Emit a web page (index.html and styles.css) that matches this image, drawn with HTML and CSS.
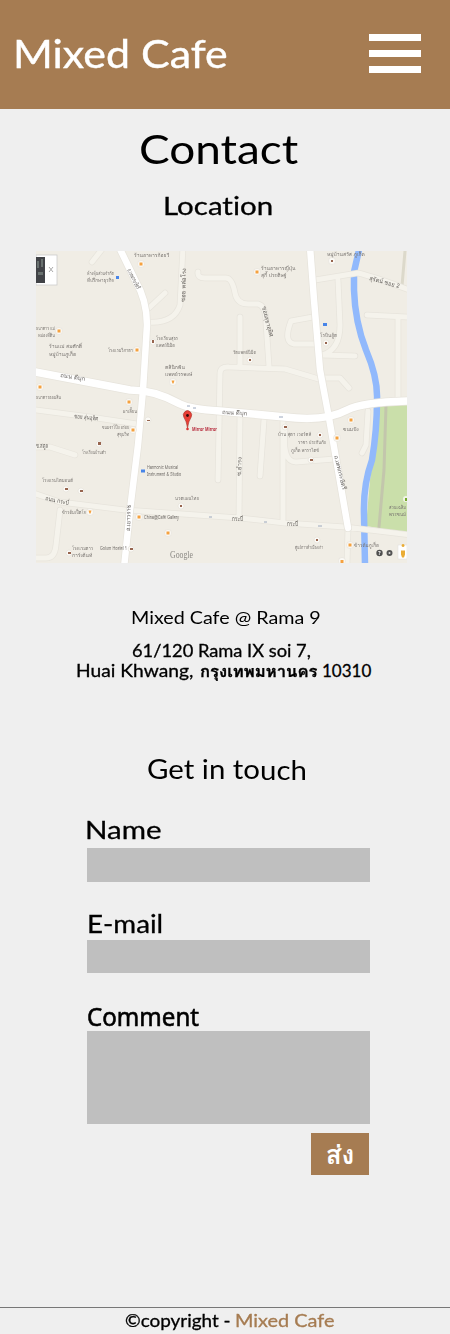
FILE: index.html
```html
<!DOCTYPE html>
<html lang="th">
<head>
<meta charset="utf-8">
<meta name="viewport" content="width=device-width">
<title>Mixed Cafe</title>
<link rel="stylesheet" href="styles.css">
</head>
<body>
<header class="header">
  <div class="brand">Mixed Cafe</div>
  <div class="menu"><span class="bar"></span><span class="bar"></span><span class="bar"></span></div>
</header>
<main class="main">
  <h1 class="title">Contact</h1>
  <h2 class="location">Location</h2>
  <svg class="map" viewBox="36 251 371 312">
    <defs>
      <path id="lanes" d="M30 492L60 502L125 510L240 518L285 523L345 527L412 535M36 410L90 417L137 424M36 447H50L75 455M60 510L56 545Q55 558 46 558H30M147 322Q174 324 180 305L183 247M149 308L165 293M92 262L103 248M198 272Q197 278 205 278H225Q232 277 235 293Q237 304 248 304H258Q266 306 266 323L269 366M240 317V365M218 480L220 374Q220 366 229 367L285 369L322 380M240 415L239 518M264 420L260 476M283 420V522M315 280L358 273Q375 277 412 291M338 280L340 325Q340 350 322 355L355 356M313 317L291 321Q283 342 294 344H314M367 315L407 317M398 317V400M323 378H340L349 388M285 430Q282 462 296 462L335 459M368 411L366 445L362 453M348 528L347 564"/>
      <path id="avenues" d="M119 247L135 280Q147 300 147 325L143 390L138 445L130 510L124 568M310 247L314 300L320 370L329 418L338 470L348 528"/>
      <path id="main-road" d="M30 371L130 390Q155 390 180 404Q190 409 220 411L285 417Q325 422 347 410Q363 402 412 401"/>
    </defs>
    <rect x="36" y="251" width="371" height="312" fill="#f0ede5"/>
    <path d="M378 405L407 402V533L366 526L370 480L374 450Z" fill="#cadfaa"/>
    <path d="M386 405L384 470L379 527" class="road" stroke="#c3c6ac" stroke-width="3"/>
    <path d="M405 251L402 286" class="road" stroke="#dcd9cb" stroke-width="3"/>
    <path d="M359 250L354 272V290Q355 322 366 350Q378 378 377 400Q377 430 372 460Q363 485 364 515L365 564" class="road" stroke="#91b9fc" stroke-width="6.5"/>
    <g class="road">
      <use href="#lanes" stroke="#e7e4dc" stroke-width="6.5"/>
      <use href="#lanes" stroke="#f5f3ec" stroke-width="5"/>
      <use href="#avenues" stroke="#e7e4dc" stroke-width="8"/>
      <use href="#main-road" stroke="#e7e4dc" stroke-width="9"/>
      <use href="#avenues" stroke="#fff" stroke-width="6.5"/>
      <use href="#main-road" stroke="#fff" stroke-width="7.5"/>
    </g>
    <g class="label">
      <text x="134" y="257">ร้านอาหารก้อยวี</text>
      <text x="87" y="275" textLength="27" lengthAdjust="spacingAndGlyphs">ห้างหุ้นส่วนจำกัด</text><text x="87" y="282" textLength="27" lengthAdjust="spacingAndGlyphs">ที่ปรึกษาธุรกิจ</text>
      <text x="261" y="270">ร้านอาหารญี่ปุ่น</text><text x="261" y="277">สุกี้ ประดิษฐ์</text>
      <text x="327" y="256">หมู่บ้านสวัส ภูเก็ต</text>
      <text x="36" y="330" textLength="19" lengthAdjust="spacingAndGlyphs">ธนาคาร แม่</text><text x="38" y="337" textLength="17" lengthAdjust="spacingAndGlyphs">หม่องที่ดิน</text>
      <text x="49" y="348">ร้านแม่ สมศักดิ์</text><text x="49" y="356">หมู่บ้านภูเก็ต</text>
      <text x="108" y="352" textLength="25" lengthAdjust="spacingAndGlyphs">โรงแรมวิภาดา</text>
      <text x="156" y="340" textLength="22" lengthAdjust="spacingAndGlyphs">โรงเรียนสุธร</text><text x="156" y="347" textLength="19" lengthAdjust="spacingAndGlyphs">แพทย์นิมิต</text>
      <text x="233" y="354" textLength="23" lengthAdjust="spacingAndGlyphs">วัดแพทย์นิมิต</text>
      <text x="320" y="337" textLength="17" lengthAdjust="spacingAndGlyphs">โรบินฮู้ด</text>
      <text x="165" y="369">คลินิกฟัน</text><text x="165" y="376">แพทย์วรพงษ์</text>
      <text x="36" y="399" textLength="25" lengthAdjust="spacingAndGlyphs">ธนาคารออมสิน</text>
      <text x="123" y="413" textLength="14" lengthAdjust="spacingAndGlyphs">ผาเลี้ยน</text>
      <text x="102" y="429" textLength="27" lengthAdjust="spacingAndGlyphs">ขนมจาโป๊ย อร่อย</text><text x="117" y="436" textLength="12" lengthAdjust="spacingAndGlyphs">สุขุมวิท</text>
      <text x="82" y="454" textLength="24" lengthAdjust="spacingAndGlyphs">โรงเรียนบ้านดำ</text>
      <text x="278" y="436" textLength="33" lengthAdjust="spacingAndGlyphs">บ้าน สุดา เวอร์คส์</text><text x="298" y="444" textLength="28" lengthAdjust="spacingAndGlyphs">ราชา ประกันภัย</text><text x="291" y="452" textLength="28" lengthAdjust="spacingAndGlyphs">ภูเก็ต พาราไดซ์</text>
      <text x="343" y="431">ขนมปัง</text>
      <text x="42" y="482" textLength="31" lengthAdjust="spacingAndGlyphs">โรงแรมไดมอนด์</text>
      <text x="147" y="469" textLength="31" lengthAdjust="spacingAndGlyphs">Harmonic Musical</text><text x="147" y="476" textLength="34" lengthAdjust="spacingAndGlyphs">Instrument &amp; Studio</text>
      <text x="175" y="500" textLength="24" lengthAdjust="spacingAndGlyphs">นวดแผนไทย</text>
      <text x="62" y="514" textLength="24" lengthAdjust="spacingAndGlyphs">ข้าวต้มเป็ดโจ</text>
      <text x="144" y="519" textLength="35" lengthAdjust="spacingAndGlyphs">China@Café Gallery</text>
      <text x="72" y="550" textLength="21" lengthAdjust="spacingAndGlyphs">โรงแรมดาว</text><text x="72" y="557">การ์เด้นท์</text>
      <text x="100" y="550" textLength="27" lengthAdjust="spacingAndGlyphs">Golum Hostel 1</text>
      <text x="295" y="549" textLength="28" lengthAdjust="spacingAndGlyphs">ศูนย์การค้าเมืองเก่า</text><text x="354" y="547" textLength="25" lengthAdjust="spacingAndGlyphs">ข้าวต้มภูเก็ต</text>
      <text x="389" y="509" textLength="17" lengthAdjust="spacingAndGlyphs">สวนเฉลิม</text><text x="389" y="516" textLength="17" lengthAdjust="spacingAndGlyphs">พระชนม์</text>
    </g>
    <g class="street">
      <text transform="translate(60 377) rotate(9)">ถนน ดีบุก</text>
      <text transform="translate(222 414) rotate(3)">ถนน ดีบุก</text>
      <text transform="translate(74 418) rotate(6)" textLength="24" lengthAdjust="spacingAndGlyphs">ซอย สุ่นอุทิศ</text>
      <text transform="translate(369 280) rotate(15)" textLength="31" lengthAdjust="spacingAndGlyphs">สุรัตน์ ซอย 2</text>
      <text transform="translate(45 500) rotate(12)" textLength="24" lengthAdjust="spacingAndGlyphs">ถนน กระบี่</text>
      <text transform="translate(185 302) rotate(-88)">ซอย หล่อโรง</text>
      <text transform="translate(127 270) rotate(63)" textLength="22" lengthAdjust="spacingAndGlyphs">ถ.เทพกระษัตรี</text>
      <text transform="translate(262 307) rotate(76)" textLength="31" lengthAdjust="spacingAndGlyphs">ซอยสุธาอุทิศ</text>
      <text transform="translate(130 531) rotate(-88)" textLength="26" lengthAdjust="spacingAndGlyphs">ถ.เยาวราช</text>
      <text transform="translate(334 456) rotate(76)" textLength="35" lengthAdjust="spacingAndGlyphs">ถ.เทพกระษัตรี</text>
      <text transform="translate(241 476) rotate(-88)">ซ.ธำรง</text>
      <text x="232" y="521" textLength="11" lengthAdjust="spacingAndGlyphs">กระบี่</text><text x="287" y="526" textLength="11" lengthAdjust="spacingAndGlyphs">กระบี่</text><text x="36" y="448" textLength="12" lengthAdjust="spacingAndGlyphs">ซ.สตูล</text>
    </g>
    <g fill="#fbfaf6" stroke="#dedbd3" stroke-width=".5">
      <circle cx="59" cy="331" r="3.5"/><circle cx="141" cy="264" r="3.5"/><circle cx="137" cy="350" r="3.5"/><circle cx="257" cy="272" r="3.5"/><circle cx="40" cy="387" r="3.5"/><circle cx="129" cy="402" r="3.5"/><circle cx="133" cy="430" r="3.5"/><circle cx="173" cy="382" r="3.5"/><circle cx="351" cy="420" r="3.5"/><circle cx="337" cy="438" r="3.5"/><circle cx="90" cy="512" r="3.5"/><circle cx="139" cy="517" r="3.5"/><circle cx="168" cy="533" r="3.5"/><circle cx="350" cy="545" r="3.5"/><circle cx="342" cy="561" r="3.5"/><circle cx="332" cy="261" r="3.5"/><circle cx="250" cy="360" r="3"/><circle cx="326" cy="343" r="3"/><circle cx="153" cy="342" r="3"/><circle cx="148" cy="420" r="3"/><circle cx="99" cy="444" r="3"/><circle cx="285" cy="427" r="3"/><circle cx="320" cy="435" r="3"/><circle cx="311" cy="460" r="3"/><circle cx="66" cy="489" r="3"/><circle cx="81" cy="491" r="3"/><circle cx="181" cy="506" r="3"/><circle cx="69" cy="553" r="3"/><circle cx="131" cy="549" r="3"/><circle cx="317" cy="540" r="3"/>
    </g>
    <path fill="#f5a13f" d="M57.500 329.500h3v3h-3zM139.500 262.500h3v3h-3zM135.500 348.500h3v3h-3zM255.500 270.500h3v3h-3zM38.500 385.500h3v3h-3zM127.500 400.500h3v3h-3zM131.500 428.500h3v3h-3zM171.500 380.500h3l-1 3h-1zM349.500 418.500h3v3h-3zM335.500 436.500h3v3h-3zM88.500 510.500h3l-1 3h-1zM137.500 515.500h3v3h-3zM166.500 531.500h3v3h-3zM348.500 543.500h3v3h-3zM340.500 560h3v3h-3z"/>
    <path fill="#97654f" d="M331 260h2v2h-2zM249 359h2v2h-2zM325 342h2v2h-2zM152 340h2v3h-2zM147 420h3v1h-3zM98 442h3v3h-3zM284 426h3v2h-3zM319 434h2v2h-2zM310 459h3v2h-3zM65 488h3v2h-3zM80 490h3v2h-3zM180 505h2v2h-2zM68 552h3v2h-3zM130 548h3v2h-3zM316 539h2v2h-2z"/>
    <path fill="#4885e8" d="M116 276h3v3h-3zM323 323h4v3h-4zM141 469.500h4v3h-4z"/>
    <path stroke="#9ca8bd" d="M187 406h3M193 408h3M279 417h4M209 517h3M264 522h3M318 526h4"/>
    <path d="M187.500 428Q186.500 421 184 417.500A4.100 4.500 0 1 1 191 417.500Q188.500 421 187.500 428" fill="#e93f35" stroke="#a52d27" stroke-width=".6"/>
    <circle cx="187.500" cy="415.500" r="1.400" fill="#330b0b"/><circle cx="187.500" cy="429" r="1.300" fill="#d33"/>
    <text class="place" x="192" y="431" textLength="25" lengthAdjust="spacingAndGlyphs">Mirror Mirror</text>
    <text class="google" x="170" y="558" textLength="23" lengthAdjust="spacingAndGlyphs">Google</text>
    <rect x="36" y="255" width="21" height="30" fill="#fff" stroke="#ccc" stroke-width=".8"/>
    <path d="M36 257H45V283H36Z" fill="#414347"/><path d="M37 261h2v7h-2zM41 259h2v8h-2zM38 272h5v3h-5z" fill="#69716f"/>
    <path d="M49 267L53 272M53 267L49 272" stroke="#aaa"/>
    <circle cx="379.500" cy="553" r="3.200" fill="#4e4e4e"/><text x="378.300" y="555" class="help">?</text>
    <circle cx="389.500" cy="553" r="2" fill="#ddd" stroke="#555" stroke-width="2"/>
    <rect x="398" y="545" width="9" height="14" fill="#fff" stroke="#ddd" stroke-width=".5"/><path d="M403 547a1.500 1.500 0 1 1 .1 0M401 550.500h4v4l-1 3h-2l-1-3z" fill="#eaac35"/>
    <circle cx="406" cy="499" r="3" fill="#f1f5e7"/><path d="M405 498h2v3h-2z" fill="#75a82c"/>
  </svg>
  <p class="place-name">Mixed Cafe @ Rama 9</p>
  <p class="address">61/120 Rama IX soi 7,</p>
  <p class="city"><span class="district">Huai Khwang,</span> <span class="province">กรุงเทพมหานคร</span> <span class="postcode">10310</span></p>
  <h2 class="touch">Get in to<span class="drop">uch</span></h2>
  <form class="form">
    <label class="label-name" for="name">Name</label>
    <input class="field" id="name">
    <label class="label-mail" for="mail">E-mail</label>
    <input class="field field-mail" id="mail">
    <label class="label-comment" for="comment">Comment</label>
    <textarea class="field area" id="comment"></textarea>
    <button class="send" type="button">ส่ง</button>
  </form>
</main>
<footer class="footer"><span class="copy">©copyright -</span> <span class="accent">Mixed Cafe</span></footer>
</body>
</html>
```
FILE: styles.css
```css
* { box-sizing: border-box; }
body { margin: 0; width: 450px; min-height: 1334px; display: flex; flex-direction: column; background: #efefef; color: #000; font-family: Lato, Loma, "Noto Sans Thai", "Noto Sans", sans-serif; font-variant-ligatures: none; overflow-x: hidden; }
h1, h2, p { margin: 0; font-weight: 400; white-space: nowrap; }
.brand, .title, .location, .place-name, .address, .district, .province, .postcode, .touch, .label-name, .label-mail, .label-comment, .copy, .accent { transform-origin: 0 50%; white-space: nowrap; }
.header { height: 109px; background: #a67c52; color: #fff; display: flex; justify-content: space-between; align-items: flex-start; padding: 0 29px 0 13px; }
.brand { font-size: 38px; line-height: 46px; padding-top: 30px; transform: scaleX(1.13); -webkit-text-stroke: .4px; }
.menu { display: flex; flex-direction: column; gap: 9px; padding-top: 34px; }
.bar { display: block; width: 52px; height: 7px; background: #fff; }
.main { flex: 1; display: flex; flex-direction: column; align-items: flex-start; }
.title { font-size: 41px; line-height: 50px; margin: 15px 0 0 139px; transform: scaleX(1.12); }
.location { font-size: 25px; line-height: 30px; margin: 16px 0 0 163px; transform: scaleX(1.18); -webkit-text-stroke: .3px; }
.map { display: block; width: 371px; height: 312px; margin: 31px 0 0 36px; }
.road { fill: none; stroke-linecap: round; stroke-linejoin: round; }
.label { fill: #77736f; font: 5px Loma, "Noto Sans Thai", "Noto Sans", sans-serif; filter: blur(.35px); }
.street { fill: #5f5b57; font: 6px Loma, "Noto Sans Thai", "Noto Sans", sans-serif; filter: blur(.3px); }
.place { fill: #b6283a; font: bold 5px "Open Sans", sans-serif; }
.google { fill: #8b8984; font: 10px "Liberation Serif", serif; }
.help { fill: #fff; font: bold 5px "Open Sans", sans-serif; }
.place-name { font-size: 17px; line-height: 20px; margin: 45px 0 0 131px; transform: scaleX(1.16); }
.address { font-size: 17px; line-height: 20px; margin: 13px 0 0 132px; transform: scaleX(1.075); -webkit-text-stroke: .3px; }
.city { display: flex; margin-left: 76px; font-size: 17px; line-height: 20px; -webkit-text-stroke: .3px; }
.district { width: 124px; transform: scaleX(1.13); }
.province { width: 122px; font-size: 15px; font-weight: 700; transform: scaleX(1.11); }
.postcode { transform: scaleX(1); }
.touch { font-size: 27px; line-height: 32px; margin: 72px 0 0 147px; transform: scaleX(1.09); }
.drop { display: inline-block; transform: translateY(1px); }
.form { display: flex; flex-direction: column; align-items: flex-start; width: 283px; margin: 29px 0 0 87px; }
.label-name, .label-mail { font-size: 25px; line-height: 30px; -webkit-text-stroke: .3px; }
.label-name { margin-left: -2px; transform: scaleX(1.18); }
.label-mail { margin-top: 26px; transform: scaleX(1.11); }
.label-comment { font: 25px/30px "Noto Sans", sans-serif; margin-top: 28px; transform: scaleX(.963); -webkit-text-stroke: .6px; }
.field { display: block; width: 283px; height: 34px; padding: 0; border: 0; border-radius: 0; background: #bfbfbf; resize: none; }
.label-name + .field { margin-top: 4px; }
.field-mail { height: 33px; margin-top: 2px; }
.area { height: 93px; }
.send { align-self: flex-end; width: 58px; height: 42px; margin: 9px 1px 0 0; padding: 0; border: 0; background: #a67c52; color: #fff; font: bold 26px Loma, "Noto Sans Thai", "Noto Sans", sans-serif; }
.footer { display: flex; height: 27px; border-top: 1px solid #777; padding-left: 125px; font-size: 17px; line-height: 25px; -webkit-text-stroke: .3px; }
.copy { width: 110px; transform: scaleX(1.11); }
.accent { color: #a67c52; transform: scaleX(1.17); }
```
